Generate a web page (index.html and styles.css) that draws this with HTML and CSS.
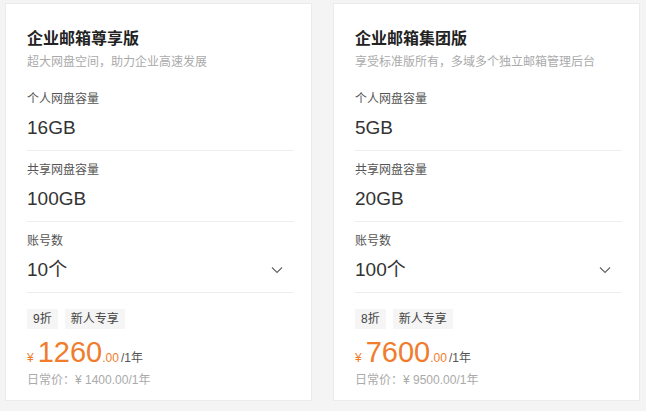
FILE: index.html
```html
<!DOCTYPE html>
<html lang="zh-CN">
<head>
<meta charset="utf-8">
<title>企业邮箱</title>
<link rel="stylesheet" href="styles.css">
</head>
<body>
<div class="plans">
  <div class="card">
    <div class="head">
      <div class="title">企业邮箱尊享版</div>
      <div class="desc">超大网盘空间，助力企业高速发展</div>
    </div>
    <div class="row">
      <div class="label">个人网盘容量</div>
      <div class="value">16GB</div>
    </div>
    <div class="row">
      <div class="label">共享网盘容量</div>
      <div class="value">100GB</div>
    </div>
    <div class="row">
      <div class="label">账号数</div>
      <div class="value select"><span>10个</span>
        <svg class="chev" width="12" height="8" viewBox="0 0 12 8"><path d="M1 1.5 L6 6.5 L11 1.5" fill="none" stroke="#666" stroke-width="1.2"/></svg>
      </div>
    </div>
    <div class="foot">
      <div class="tags"><span class="tag">9折</span><span class="tag">新人专享</span></div>
      <div class="price"><span class="cur">¥</span><span class="num">1260</span><span class="dec">.00</span><span class="per">/1年</span></div>
      <div class="orig">日常价：¥ 1400.00/1年</div>
    </div>
  </div>
  <div class="card">
    <div class="head">
      <div class="title">企业邮箱集团版</div>
      <div class="desc">享受标准版所有，多域多个独立邮箱管理后台</div>
    </div>
    <div class="row">
      <div class="label">个人网盘容量</div>
      <div class="value">5GB</div>
    </div>
    <div class="row">
      <div class="label">共享网盘容量</div>
      <div class="value">20GB</div>
    </div>
    <div class="row">
      <div class="label">账号数</div>
      <div class="value select"><span>100个</span>
        <svg class="chev" width="12" height="8" viewBox="0 0 12 8"><path d="M1 1.5 L6 6.5 L11 1.5" fill="none" stroke="#666" stroke-width="1.2"/></svg>
      </div>
    </div>
    <div class="foot">
      <div class="tags"><span class="tag">8折</span><span class="tag">新人专享</span></div>
      <div class="price"><span class="cur">¥</span><span class="num">7600</span><span class="dec">.00</span><span class="per">/1年</span></div>
      <div class="orig">日常价：¥ 9500.00/1年</div>
    </div>
  </div>
</div>
</body>
</html>
```

FILE: styles.css
```css
* { box-sizing: border-box; }
html, body { margin: 0; padding: 0; }
body {
  background: #f4f4f4;
  font-family: "Liberation Sans", "Noto Sans CJK SC", sans-serif;
  color: #333;
  width: 646px;
  height: 411px;
  overflow: hidden;
}
.plans {
  display: flex;
  gap: 21px;
  padding: 3px 0 0 5px;
}
.card {
  width: 307px;
  height: 398px;
  background: #fff;
  border: 1px solid #ebebeb;
  padding: 24px 17px 0 21px;
}
.head { padding-bottom: 9px; }
.title {
  font-size: 16px;
  line-height: 22px;
  font-weight: bold;
  color: #222;
}
.desc {
  margin-top: 3px;
  font-size: 12px;
  line-height: 18px;
  color: #aaa;
}
.row {
  padding: 10px 0 8px;
  border-bottom: 1px solid #eeeeee;
}
.label {
  font-size: 12px;
  line-height: 18px;
  color: #555;
}
.value {
  margin-top: 6px;
  font-size: 19px;
  line-height: 28px;
  color: #333;
}
.select {
  display: flex;
  justify-content: space-between;
  align-items: center;
  padding-right: 11px;
}
.chev { display: block; }
.foot { padding-top: 16px; }
.tags { display: flex; gap: 7px; }
.tag {
  background: #f5f5f5;
  height: 20px;
  line-height: 20px;
  padding: 0 6px;
  font-size: 12px;
  color: #444;
}
.price {
  display: flex;
  align-items: baseline;
  margin-top: 8px;
  height: 30px;
  line-height: 30px;
  color: #f07c2c;
}
.cur { font-size: 12px; margin-right: 4px; }
.num { font-size: 29px; }
.dec { font-size: 12px; margin-right: 2px; }
.per { font-size: 12px; color: #555; }
.orig {
  margin-top: 4px;
  font-size: 12px;
  line-height: 18px;
  color: #aaa;
}
```
